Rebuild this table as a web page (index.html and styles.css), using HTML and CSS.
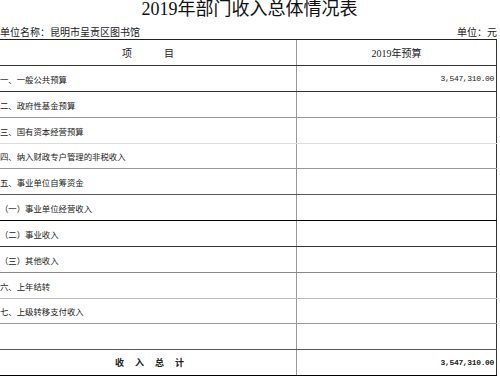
FILE: index.html
```html
<!DOCTYPE html>
<html lang="zh">
<head>
<meta charset="utf-8">
<title>2019年部门收入总体情况表</title>
<link rel="stylesheet" href="styles.css">
</head>
<body>
<div class="page">
  <h1 class="title">2019年部门收入总体情况表</h1>
  <div class="meta">
    <span>单位名称：昆明市呈贡区图书馆</span>
    <span>单位：元</span>
  </div>
  <div class="sheet">
    <div class="row head line-dark">
      <div class="cell item center"><span class="spread"><span>项</span><span>目</span></span></div>
      <div class="cell val center">2019年预算</div>
    </div>
    <div class="row line-dark">
      <div class="cell item">一、一般公共预算</div>
      <div class="cell val num">3,547,310.00</div>
    </div>
    <div class="row line-mid">
      <div class="cell item">二、政府性基金预算</div>
      <div class="cell val"></div>
    </div>
    <div class="row line-faint">
      <div class="cell item">三、国有资本经营预算</div>
      <div class="cell val"></div>
    </div>
    <div class="row line-mid short">
      <div class="cell item">四、纳入财政专户管理的非税收入</div>
      <div class="cell val"></div>
    </div>
    <div class="row line-darkgrey">
      <div class="cell item">五、事业单位自筹资金</div>
      <div class="cell val"></div>
    </div>
    <div class="row line-black">
      <div class="cell item">（一）事业单位经营收入</div>
      <div class="cell val"></div>
    </div>
    <div class="row line-dark">
      <div class="cell item">（二）事业收入</div>
      <div class="cell val"></div>
    </div>
    <div class="row line-grey">
      <div class="cell item">（三）其他收入</div>
      <div class="cell val"></div>
    </div>
    <div class="row line-light">
      <div class="cell item">六、上年结转</div>
      <div class="cell val"></div>
    </div>
    <div class="row line-mid short">
      <div class="cell item">七、上级转移支付收入</div>
      <div class="cell val"></div>
    </div>
    <div class="row line-darkgrey">
      <div class="cell item"></div>
      <div class="cell val"></div>
    </div>
    <div class="row total line-black">
      <div class="cell item center"><span class="spread tight"><span>收</span><span>入</span><span>总</span><span>计</span></span></div>
      <div class="cell val num">3,547,310.00</div>
    </div>
  </div>
</div>
</body>
</html>
```
FILE: styles.css
```css
html, body {
  margin: 0;
  padding: 0;
  background: #fff;
  overflow: hidden;
}
body {
  font-family: "Liberation Serif", "Noto Sans CJK SC", serif;
  color: #111;
}
.page {
  width: 497px;
}
.title {
  margin: 0;
  height: 18px;
  font-size: 18px;
  line-height: 18px;
  font-weight: normal;
  text-align: center;
  padding-left: 2px;
  color: #111;
  overflow: visible;
}
.meta {
  display: flex;
  justify-content: space-between;
  align-items: flex-start;
  font-size: 10px;
  line-height: 12px;
  height: 21px;
  padding-top: 9px;
  box-sizing: border-box;
  width: 497px;
  color: #222;
  overflow: visible;
}
.sheet {
  width: 497px;
  border-top: 1px solid #222;
}
.row {
  display: grid;
  grid-template-columns: 297px 200px;
  height: 26px;
  box-sizing: border-box;
  border-bottom: 1px solid #444;
}
.row.short { height: 25px; }
.line-dark { border-bottom-color: #333; }
.line-darkgrey { border-bottom-color: #555; }
.line-black { border-bottom-color: #000; }
.line-mid { border-bottom-color: #999; }
.line-grey { border-bottom-color: #888; }
.line-light { border-bottom-color: #bbb; }
.line-faint { border-bottom-color: #ddd; }
.cell {
  display: flex;
  align-items: center;
  font-size: 8.4px;
  color: #222;
  white-space: nowrap;
}
.item {
  border-right: 1px solid #999;
}
.val {
  border-right: 1px solid #333;
  justify-content: flex-end;
  padding-right: 2px;
}
.center { justify-content: center; }
.val.center { padding-right: 0; font-size: 10px; }
.head .item { font-size: 10px; }
.spread {
  display: flex;
  gap: 32px;
}
.spread.tight {
  gap: 11px;
  font-size: 9px;
  font-weight: bold;
  padding-left: 3px;
}
.num {
  font-family: "Liberation Mono", monospace;
  font-size: 8px;
  letter-spacing: -0.35px;
}
.total .num { font-weight: bold; }
```
